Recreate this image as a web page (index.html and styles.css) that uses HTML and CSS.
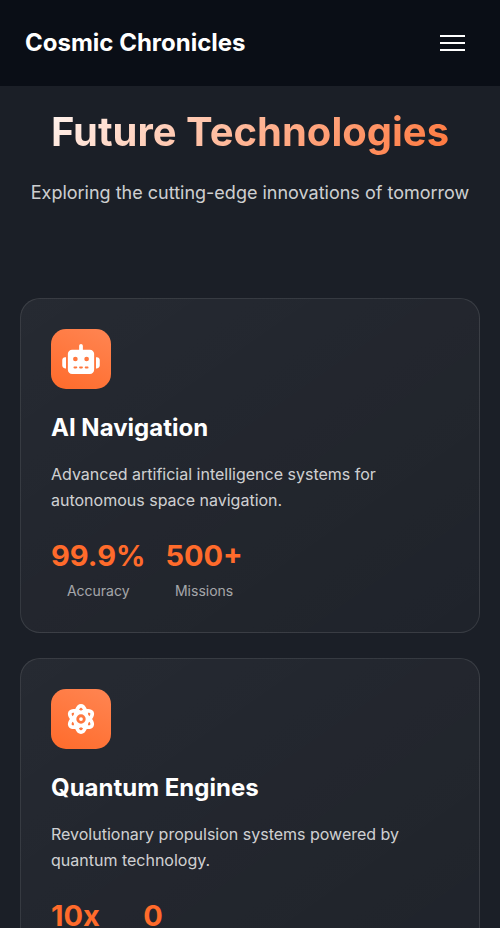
FILE: index.html
```html
<!DOCTYPE html>
<html lang="en">
<head>
<meta charset="utf-8">
<meta name="viewport" content="width=device-width, initial-scale=1">
<title>Cosmic Chronicles</title>
<link rel="stylesheet" href="styles.css">
</head>
<body>
<header class="navbar">
  <a class="logo" href="#">Cosmic Chronicles</a>
  <button class="menu-toggle" type="button" aria-label="Menu">
    <span class="bar"></span>
    <span class="bar"></span>
    <span class="bar"></span>
  </button>
</header>
<main class="section">
  <div class="section-header">
    <h1 class="section-title">Future Technologies</h1>
    <p class="section-subtitle">Exploring the cutting-edge innovations of tomorrow</p>
  </div>
  <div class="cards">
    <article class="card">
      <div class="card-icon">
        <svg class="icon icon-wide" viewBox="0 0 640 512" aria-hidden="true"><path d="M320 0c17.700 0 32 14.300 32 32V96H472c39.800 0 72 32.200 72 72V440c0 39.800-32.200 72-72 72H168c-39.800 0-72-32.200-72-72V168c0-39.800 32.200-72 72-72H288V32c0-17.700 14.300-32 32-32zM208 384c-8.800 0-16 7.200-16 16s7.200 16 16 16h32c8.800 0 16-7.200 16-16s-7.200-16-16-16H208zm96 0c-8.800 0-16 7.200-16 16s7.200 16 16 16h32c8.800 0 16-7.200 16-16s-7.200-16-16-16H304zm96 0c-8.800 0-16 7.200-16 16s7.200 16 16 16h32c8.800 0 16-7.200 16-16s-7.200-16-16-16H400zM264 256a40 40 0 1 0 -80 0 40 40 0 1 0 80 0zm152 40a40 40 0 1 0 0-80 40 40 0 1 0 0 80zM48 224H64V416H48c-26.500 0-48-21.500-48-48V272c0-26.500 21.500-48 48-48zm544 0c26.500 0 48 21.500 48 48v96c0 26.500-21.500 48-48 48H576V224h16z"/></svg>
      </div>
      <h2 class="card-title">AI Navigation</h2>
      <p class="card-text">Advanced artificial intelligence systems for autonomous space navigation.</p>
      <div class="stats">
        <div class="stat"><span class="stat-number">99.9%</span><span class="stat-label">Accuracy</span></div>
        <div class="stat"><span class="stat-number">500+</span><span class="stat-label">Missions</span></div>
      </div>
    </article>
    <article class="card">
      <div class="card-icon">
        <svg class="icon" viewBox="0 0 512 512" aria-hidden="true"><path d="M256 398.800c-11.800 5.100-23.400 9.700-34.900 13.500c16.700 33.800 31 35.700 34.900 35.700s18.100-1.900 34.900-35.700c-11.400-3.900-23.100-8.400-34.900-13.500zM446 256c33 45.200 44.300 90.900 23.600 128c-20.200 36.300-62.500 49.300-115.200 43.200c-22 52.100-55.600 84.800-98.400 84.800s-76.400-32.700-98.400-84.800c-52.700 6.100-95-6.800-115.200-43.200C21.700 346.900 33 301.200 66 256c-33-45.200-44.300-90.900-23.600-128c20.200-36.300 62.500-49.300 115.200-43.200C179.600 32.700 213.200 0 256 0s76.400 32.700 98.400 84.800c52.700-6.100 95 6.800 115.200 43.200c20.700 37.100 9.400 82.800-23.600 128zm-65.800 67.400c-1.700 14.200-3.900 28-6.700 41.200c31.800 1.400 38.600-8.700 40.200-11.700c2.300-4.200 7-17.900-11.900-48.100c-6.800 6.300-14 12.500-21.600 18.600zm-6.700-175.900c2.800 13.100 5 26.900 6.700 41.200c7.600 6.100 14.800 12.300 21.600 18.600c18.900-30.200 14.200-44 11.900-48.100c-1.600-2.900-8.400-13-40.200-11.700zM290.900 99.700C274.100 65.900 259.900 64 256 64s-18.100 1.900-34.900 35.700c11.400 3.900 23.100 8.400 34.900 13.500c11.800-5.100 23.400-9.700 34.900-13.500zm-159 88.900c1.700-14.300 3.900-28 6.700-41.200c-31.800-1.400-38.600 8.700-40.200 11.700c-2.300 4.200-7 17.900 11.900 48.100c6.800-6.300 14-12.500 21.600-18.600zM110.200 304.800C91.400 335 96 348.700 98.300 352.900c1.600 2.900 8.400 13 40.200 11.700c-2.800-13.100-5-26.900-6.700-41.200c-7.600-6.100-14.800-12.300-21.600-18.600zM336 256a80 80 0 1 0 -160 0 80 80 0 1 0 160 0zm-80-32a32 32 0 1 1 0 64 32 32 0 1 1 0-64z"/></svg>
      </div>
      <h2 class="card-title">Quantum Engines</h2>
      <p class="card-text">Revolutionary propulsion systems powered by quantum technology.</p>
      <div class="stats">
        <div class="stat"><span class="stat-number">10x</span><span class="stat-label">Faster</span></div>
        <div class="stat"><span class="stat-number">0</span><span class="stat-label">Emissions</span></div>
      </div>
    </article>
  </div>
</main>
</body>
</html>
```
FILE: styles.css
```css
* {
  box-sizing: border-box;
  margin: 0;
  padding: 0;
}

body {
  background: #1b1f27;
  color: #fff;
  font-family: Inter, "Liberation Sans", sans-serif;
  font-size: 16px;
  line-height: 26px;
}

.navbar {
  position: sticky;
  top: 0;
  z-index: 10;
  display: flex;
  align-items: center;
  justify-content: space-between;
  padding: 24px 25px;
  background: #0a0e16;
}

.logo {
  color: #fff;
  font-size: 24px;
  font-weight: 700;
  line-height: 38px;
  text-decoration: none;
}

.menu-toggle {
  display: flex;
  flex-direction: column;
  gap: 5px;
  padding: 10px;
  border: 0;
  background: none;
  cursor: pointer;
}

.bar {
  width: 25px;
  height: 2px;
  background: #fff;
}

.section {
  padding: 14px 20px 80px;
}

.section-header {
  margin-bottom: 91px;
  text-align: center;
}

.section-title {
  margin-bottom: 14px;
  background: linear-gradient(135deg, #fff, #ff6b2b);
  -webkit-background-clip: text;
  background-clip: text;
  color: transparent;
  font-size: 40px;
  font-weight: 700;
  line-height: 64px;
}

.section-subtitle {
  color: rgba(255, 255, 255, 0.8);
  font-size: 18px;
  line-height: 29px;
}

.cards {
  display: grid;
  gap: 25px;
}

.card {
  padding: 30px;
  border: 1px solid rgba(255, 255, 255, 0.1);
  border-radius: 20px;
  background: linear-gradient(145deg, rgba(255, 255, 255, 0.05), rgba(255, 255, 255, 0.02));
}

.card-icon {
  display: flex;
  align-items: center;
  justify-content: center;
  width: 60px;
  height: 60px;
  margin-bottom: 20px;
  border-radius: 15px;
  background: linear-gradient(25deg, #ff6b2b, #ff8552);
}

.icon {
  width: 30px;
  height: 30px;
  fill: #fff;
}

.icon-wide {
  width: 38px;
}

.card-title {
  margin-bottom: 14px;
  font-size: 24px;
  font-weight: 700;
  line-height: 38px;
}

.card-text {
  margin-bottom: 20px;
  color: rgba(255, 255, 255, 0.8);
}

.stats {
  display: flex;
  gap: 20px;
}

.stat {
  display: flex;
  flex-direction: column;
  align-items: center;
}

.stat-number {
  color: #ff6b2b;
  font-size: 29px;
  font-weight: 700;
  line-height: 46px;
}

.stat-label {
  color: rgba(255, 255, 255, 0.6);
  font-size: 14px;
  line-height: 23px;
}
```
